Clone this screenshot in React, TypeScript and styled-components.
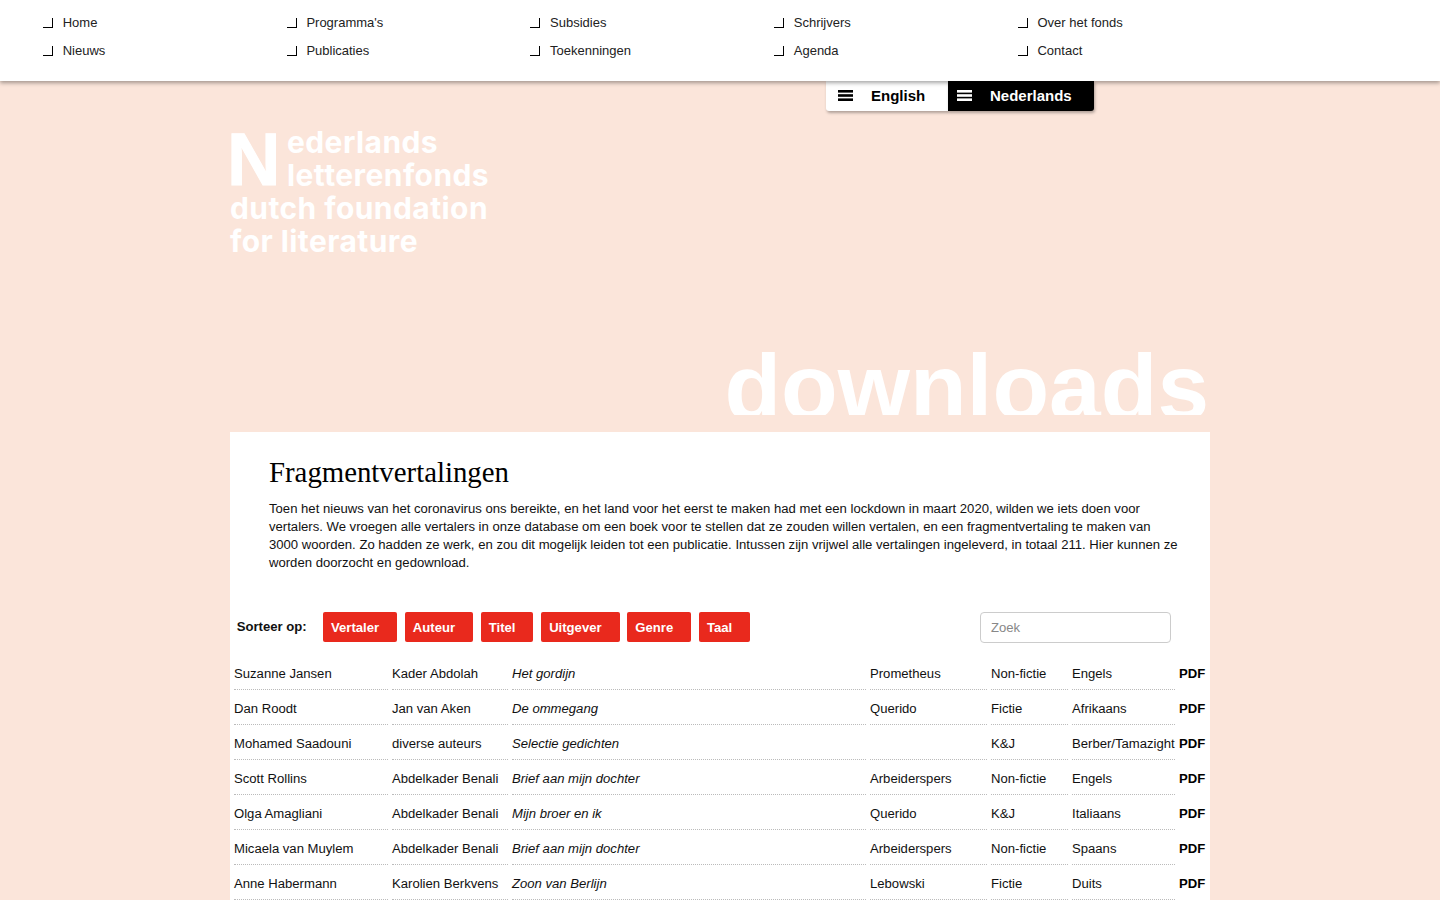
import React from "react";
import styled, { createGlobalStyle } from "styled-components";

const Global = createGlobalStyle`
  html, body { margin: 0; padding: 0; background: #fbe5da; }
  body { font-family: "Liberation Sans", Arial, sans-serif; font-size: 13.12px; color: #111; overflow-x: hidden; }
  * { box-sizing: border-box; }
`;

const Header = styled.header`
  background: #fff;
  height: 81px;
  box-shadow: 0 2px 4px rgba(0, 0, 0, 0.35);
  padding: 9px 0 0 43px;
  position: relative;
`;
const NavGrid = styled.ul`
  list-style: none;
  margin: 0;
  padding: 0;
  display: grid;
  grid-template-columns: repeat(5, 243.7px);
  grid-auto-rows: 28px;
  font-size: 13px;
`;
const NavItem = styled.li`
  display: flex;
  align-items: center;
  gap: 9.7px;
  color: #222;
  line-height: 28px;
`;
const NavMark = styled.span`
  width: 10px;
  height: 10px;
  border-right: 1px solid #000;
  border-bottom: 1px solid #000;
`;
const Wrapper = styled.div`
  width: 980px;
  margin: 0 auto;
`;
const LangRow = styled.div`
  display: flex;
  height: 30px;
  padding-left: 596px;
`;
const LangButton = styled.div<{ $dark?: boolean; $w: number }>`
  width: ${(p) => p.$w}px;
  height: 30px;
  display: flex;
  align-items: center;
  gap: 18px;
  padding: 0 0 2px ${(p) => (p.$dark ? 9 : 12)}px;
  background: ${(p) => (p.$dark ? "#000" : "#fff")};
  color: ${(p) => (p.$dark ? "#fff" : "#000")};
  font-weight: 700;
  font-size: 15px;
  border-radius: ${(p) => (p.$dark ? "0 0 3px 0" : "0 0 0 3px")};
  box-shadow: 1px 2px 3px rgba(0, 0, 0, 0.3);
`;
const Logo = styled.div`
  margin-top: 15px;
  height: 128px;
  color: #fff;
  font-family: "Inter", "Liberation Sans", sans-serif;
  font-weight: 700;
  font-size: 30px;
  line-height: 33px;
  letter-spacing: 0.42px;
  white-space: nowrap;
`;
const LogoTop = styled.div`
  display: flex;
  height: 66px;
`;
const LogoN = styled.span`
  font-family: "Liberation Sans", sans-serif;
  font-weight: 700;
  font-size: 74px;
  line-height: 68px;
  width: 57px;
  letter-spacing: 0;
  margin-left: -3px;
  margin-right: 3px;
  -webkit-text-stroke: 1px #fff;
`;
const PageTitle = styled.div`
  margin-top: 66px;
  height: 95px;
  overflow: hidden;
  text-align: right;
  color: #fff;
  font-size: 92.8px;
  font-weight: 700;
  line-height: 134px;
  padding-right: 1px;
`;
const Card = styled.main`
  background: #fff;
  margin-top: 17px;
  padding: 0 4px;
  height: 468px;
  overflow: hidden;
`;
const Intro = styled.section`
  padding: 23px 27px 0 35px;
`;
const Title = styled.h1`
  margin: 0;
  font-family: "Liberation Serif", serif;
  font-weight: 400;
  font-size: 28.8px;
  line-height: 34px;
  color: #000;
`;
const Lead = styled.p`
  margin: 11px 0 0;
  line-height: 18px;
  color: #111;
`;
const Toolbar = styled.div`
  margin-top: 40px;
  height: 31px;
  display: flex;
  align-items: flex-start;
`;
const SortLabel = styled.span`
  width: 89px;
  padding-left: 2.7px;
  font-weight: 700;
  line-height: 29px;
  color: #111;
`;
const SortButtons = styled.div`
  display: flex;
  gap: 7.7px;
`;
const SortButton = styled.button`
  height: 30px;
  padding: 0 18px 0 8px;
  border: 0;
  border-radius: 2px;
  background: #e9291d;
  color: #fff;
  font: 700 13.12px "Liberation Sans", sans-serif;
`;
const Search = styled.input`
  margin-left: auto;
  margin-right: 35px;
  width: 191px;
  height: 31px;
  padding: 0 10px;
  border: 1px solid #ccc;
  border-radius: 4px;
  font: 13.12px "Liberation Sans", sans-serif;
  color: #555;
  background: #fff;
  &::placeholder { color: #888; opacity: 1; }
`;
const Rows = styled.div`
  margin-top: 13px;
`;
const Row = styled.div`
  display: grid;
  grid-template-columns: 154px 116px 354px 117px 77px 103px 28px;
  column-gap: 4px;
  height: 35px;
`;
const Cell = styled.div<{ $title?: boolean; $pdf?: boolean }>`
  height: 34px;
  line-height: 36px;
  white-space: nowrap;
  color: ${(p) => (p.$pdf ? "#000" : "#111")};
  font-style: ${(p) => (p.$title ? "italic" : "normal")};
  font-weight: ${(p) => (p.$pdf ? 700 : 400)};
  border-bottom: ${(p) => (p.$pdf ? "0" : "1px dotted #bbb")};
`;

const nav = ["Home", "Programma's", "Subsidies", "Schrijvers", "Over het fonds", "Nieuws", "Publicaties", "Toekenningen", "Agenda", "Contact"];
const sorts = ["Vertaler", "Auteur", "Titel", "Uitgever", "Genre", "Taal"];
const data = [
  ["Suzanne Jansen", "Kader Abdolah", "Het gordijn", "Prometheus", "Non-fictie", "Engels"],
  ["Dan Roodt", "Jan van Aken", "De ommegang", "Querido", "Fictie", "Afrikaans"],
  ["Mohamed Saadouni", "diverse auteurs", "Selectie gedichten", "", "K&J", "Berber/Tamazight"],
  ["Scott Rollins", "Abdelkader Benali", "Brief aan mijn dochter", "Arbeiderspers", "Non-fictie", "Engels"],
  ["Olga Amagliani", "Abdelkader Benali", "Mijn broer en ik", "Querido", "K&J", "Italiaans"],
  ["Micaela van Muylem", "Abdelkader Benali", "Brief aan mijn dochter", "Arbeiderspers", "Non-fictie", "Spaans"],
  ["Anne Habermann", "Karolien Berkvens", "Zoon van Berlijn", "Lebowski", "Fictie", "Duits"],
];

const Bars = ({ color }: { color: string }) => (
  <svg width="15" height="11" viewBox="0 0 15 11" aria-hidden="true">
    <rect x="0" y="0" width="15" height="2.6" fill={color} />
    <rect x="0" y="4.2" width="15" height="2.6" fill={color} />
    <rect x="0" y="8.4" width="15" height="2.6" fill={color} />
  </svg>
);

export default function App() {
  return (
    <>
      <Global />
      <Header>
        <NavGrid>
          {nav.map((n) => (
            <NavItem key={n}>
              <NavMark />
              {n}
            </NavItem>
          ))}
        </NavGrid>
      </Header>
      <Wrapper>
        <LangRow>
          <LangButton $w={122}>
            <Bars color="#000" />
            English
          </LangButton>
          <LangButton $dark $w={146}>
            <Bars color="#fff" />
            Nederlands
          </LangButton>
        </LangRow>
        <Logo>
          <LogoTop>
            <LogoN>N</LogoN>
            <div>
              ederlands
              <br />
              letterenfonds
            </div>
          </LogoTop>
          dutch foundation
          <br />
          for literature
        </Logo>
        <PageTitle>downloads</PageTitle>
        <Card>
          <Intro>
            <Title>Fragmentvertalingen</Title>
            <Lead>
              Toen het nieuws van het coronavirus ons bereikte, en het land voor het eerst te maken had met een lockdown in maart 2020, wilden we iets doen voor vertalers. We vroegen alle vertalers in onze database om een boek voor te stellen dat ze zouden willen vertalen, en een fragmentvertaling te maken van 3000 woorden. Zo hadden ze werk, en zou dit mogelijk leiden tot een publicatie. Intussen zijn vrijwel alle vertalingen ingeleverd, in totaal 211. Hier kunnen ze worden doorzocht en gedownload.
            </Lead>
          </Intro>
          <Toolbar>
            <SortLabel>Sorteer op:</SortLabel>
            <SortButtons>
              {sorts.map((s) => (
                <SortButton key={s}>{s}</SortButton>
              ))}
            </SortButtons>
            <Search placeholder="Zoek" />
          </Toolbar>
          <Rows>
            {data.map((r) => (
              <Row key={r[0]}>
                {r.map((c, i) => (
                  <Cell key={i} $title={i === 2}>
                    {c}
                  </Cell>
                ))}
                <Cell $pdf>PDF</Cell>
              </Row>
            ))}
          </Rows>
        </Card>
      </Wrapper>
    </>
  );
}
